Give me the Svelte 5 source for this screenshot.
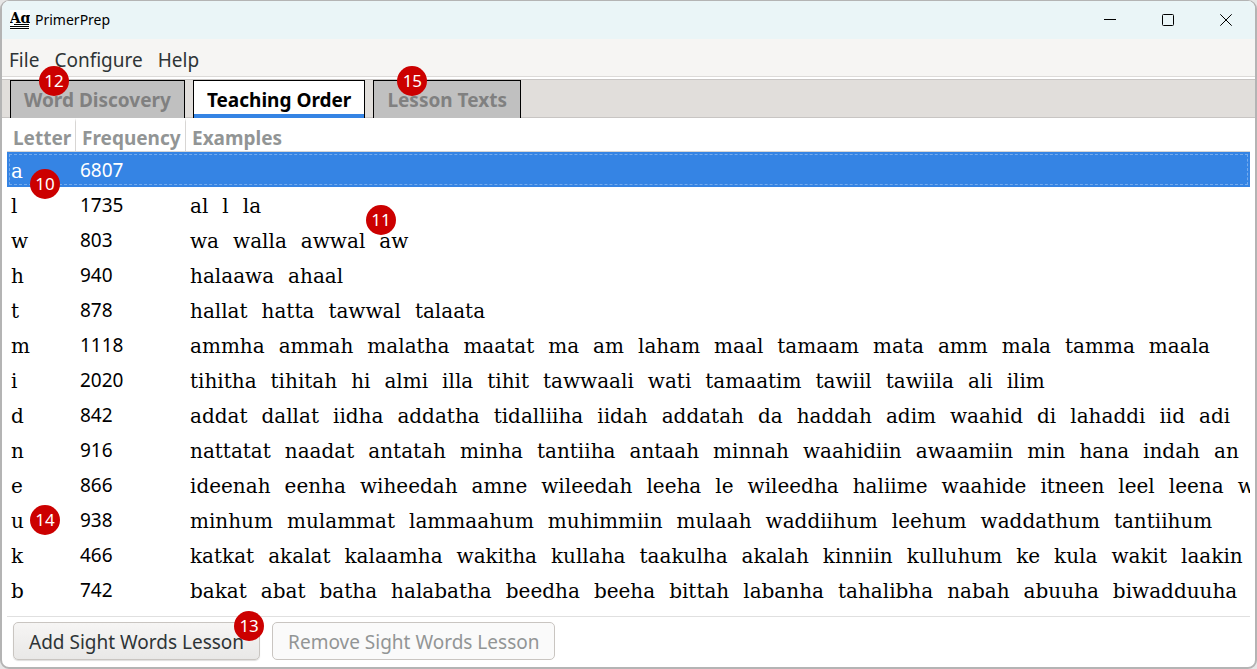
<script>
  const menus = ['File', 'Configure', 'Help'];
  let tabs = [
    { name: 'Word Discovery', note: 12 },
    { name: 'Teaching Order' },
    { name: 'Lesson Texts', note: 15 }
  ];
  let active = $state('Teaching Order');
  let selected = $state('a');

  const rows = [
    { letter: 'a', count: 6807, words: '', note: 10 },
    { letter: 'l', count: 1735, words: 'al l la' },
    { letter: 'w', count: 803, words: 'wa walla awwal aw', wordNote: 11 },
    { letter: 'h', count: 940, words: 'halaawa ahaal' },
    { letter: 't', count: 878, words: 'hallat hatta tawwal talaata' },
    { letter: 'm', count: 1118, words: 'ammha ammah malatha maatat ma am laham maal tamaam mata amm mala tamma maala' },
    { letter: 'i', count: 2020, words: 'tihitha tihitah hi almi illa tihit tawwaali wati tamaatim tawiil tawiila ali ilim' },
    { letter: 'd', count: 842, words: 'addat dallat iidha addatha tidalliiha iidah addatah da haddah adim waahid di lahaddi iid adi' },
    { letter: 'n', count: 916, words: 'nattatat naadat antatah minha tantiiha antaah minnah waahidiin awaamiin min hana indah an' },
    { letter: 'e', count: 866, words: 'ideenah eenha wiheedah amne wileedah leeha le wileedha haliime waahide itneen leel leena w' },
    { letter: 'u', count: 938, words: 'minhum mulammat lammaahum muhimmiin mulaah waddiihum leehum waddathum tantiihum', note: 14 },
    { letter: 'k', count: 466, words: 'katkat akalat kalaamha wakitha kullaha taakulha akalah kinniin kulluhum ke kula wakit laakin' },
    { letter: 'b', count: 742, words: 'bakat abat batha halabatha beedha beeha bittah labanha tahalibha nabah abuuha biwadduuha' }
  ];
</script>

<div class="window">
  <header class="titlebar">
    <svg class="logo" width="20" height="20" viewBox="0 0 20 20" aria-hidden="true">
      <rect width="20" height="20" fill="#fff" />
      <text x="10" y="13" text-anchor="middle" font-family="DejaVu Serif, serif" font-weight="bold" font-size="14">Aɑ</text>
      <path d="M4 14.5H19M0 16.5H19M0 18.5H19" stroke="#000" stroke-width="1" />
    </svg>
    <span class="title">PrimerPrep</span>
    <div class="controls">
      <button aria-label="Minimize"><svg width="12" height="12" viewBox="0 0 12 12"><path d="M0 5.5H12" /></svg></button>
      <button aria-label="Maximize"><svg width="12" height="12" viewBox="0 0 12 12"><rect x=".5" y=".5" width="11" height="11" rx="1" /></svg></button>
      <button aria-label="Close"><svg width="12" height="12" viewBox="0 0 12 12"><path d="M.3.3 11.7 11.7M11.7.3.3 11.7" /></svg></button>
    </div>
  </header>

  <nav class="menubar">
    {#each menus as menu}<button>{menu}</button>{/each}
  </nav>

  <div class="tabs" role="tablist">
    {#each tabs as tab}
      <button role="tab" aria-selected={active === tab.name} class:active={active === tab.name} onclick={() => (active = tab.name)}>
        {tab.name}
        {#if tab.note}<span class="badge" class:first={tab.note === 12} class:third={tab.note === 15}>{tab.note}</span>{/if}
      </button>
    {/each}
  </div>

  <main>
    <table>
      <thead>
        <tr><th class="c1">Letter</th><th class="c2">Frequency</th><th>Examples</th></tr>
      </thead>
      <tbody>
        {#each rows as row}
          <tr class:selected={selected === row.letter} onclick={() => (selected = row.letter)}>
            <td class="letter"><div>{row.letter}{#if row.note}<span class="badge at-letter" class:low={row.note === 10}>{row.note}</span>{/if}</div></td>
            <td class="count">{row.count}</td>
            <td class="examples">
              <div>
                {#each row.words.split(' ') as word}<span>{word}</span>{/each}
                {#if row.wordNote}<span class="badge at-word">{row.wordNote}</span>{/if}
              </div>
            </td>
          </tr>
        {/each}
      </tbody>
    </table>
  </main>

  <footer>
    <button>Add Sight Words Lesson<span class="badge at-button">13</span></button>
    <button disabled>Remove Sight Words Lesson</button>
  </footer>
</div>

<style>
  :global(body) {
    margin: 0;
    background: #e6e6e6;
  }
  .window {
    box-sizing: border-box;
    min-height: 100vh;
    display: flex;
    flex-direction: column;
    border: 1px solid #b4b4b4;
    border-width: 1px 2px 2px 2px;
    border-radius: 9px;
    background: #fff;
    font: 19px/24px 'Noto Sans', sans-serif;
    color: #000;
    overflow: hidden;
  }
  button {
    font: inherit;
    border: 0;
    padding: 0;
    background: none;
  }
  .titlebar {
    display: flex;
    align-items: center;
    height: 38px;
    padding-left: 8px;
    background: #eaf5f7;
  }
  .title {
    margin-left: 5px;
    font-size: 14px;
  }
  .controls {
    display: flex;
    margin-left: auto;
  }
  .controls button {
    display: grid;
    place-items: center;
    width: 58px;
    height: 38px;
  }
  .controls svg {
    fill: none;
    stroke: #000;
  }
  .menubar {
    display: flex;
    gap: 15px;
    height: 37px;
    padding: 0 7px;
    background: #f6f5f3;
    border-bottom: 1px solid #dcdad8;
  }
  .menubar button {
    padding-top: 5px;
    color: #2e3436;
  }
  .tabs {
    display: flex;
    gap: 8px;
    height: 38px;
    margin-top: 2px;
    padding: 0 8px;
    background: #e1dedb;
    border-top: 1px solid #c8c5c3;
    box-shadow: inset 0 -1px #c8c5c3;
  }
  .tabs button {
    position: relative;
    padding: 0 13px;
    border: 1px solid #000;
    border-bottom: 0;
    background: #c0c0c0;
    color: #808080;
    font-weight: bold;
  }
  .tabs .active {
    background: #fff;
    color: #000;
    box-shadow: inset 0 -4px #3584e4;
  }
  main {
    flex: 1;
    margin: 0 5px;
    border-bottom: 1px solid #e0e0e0;
    overflow: hidden;
  }
  table {
    width: 100%;
    table-layout: fixed;
    border-collapse: separate;
    border-spacing: 0;
  }
  th {
    height: 27px;
    padding: 2px 0 0 6px;
    border-bottom: 1px solid #d8d6d4;
    border-top: 4px solid #fff;
    text-align: left;
    font-weight: bold;
    color: #929595;
  }
  .c1 {
    width: 62px;
    border-right: 1px solid #d8d6d4;
  }
  .c2 {
    width: 103px;
    border-right: 1px solid #d8d6d4;
  }
  td {
    height: 35px;
    padding: 0 0 0 4px;
  }
  .letter div,
  .examples div {
    position: relative;
    padding-top: 2px;
    font-family: 'DejaVu Serif', serif;
    font-size: 20px;
  }
  .examples div {
    display: flex;
    gap: 14px;
    white-space: nowrap;
  }
  .selected {
    background: #3584e4;
    color: #fff;
    outline: 1px dashed #75abed;
    outline-offset: -3px;
  }
  footer {
    display: flex;
    gap: 12px;
    padding: 5px 11px 7px;
  }
  footer button {
    position: relative;
    height: 38px;
    padding: 1px 15px 0;
    border: 1px solid #c9c5c1;
    border-radius: 5px;
    background: linear-gradient(#f6f5f4, #e9e8e7);
    color: #2e3436;
    box-shadow: 0 1px 1px #0002;
  }
  footer button:disabled {
    background: #fafafa;
    color: #929595;
    box-shadow: none;
  }
  .badge {
    position: absolute;
    z-index: 1;
    width: 30px;
    height: 30px;
    border-radius: 50%;
    background: #c00;
    color: #fff;
    font: 17px/30px 'Noto Sans', sans-serif;
    text-align: center;
  }
  .first {
    left: 28px;
    top: -15px;
  }
  .third {
    left: 23px;
    top: -15px;
  }
  .letter .at-letter {
    left: 19px;
    top: -2px;
  }
  .letter .low {
    top: 12px;
  }
  .at-word {
    left: 176px;
    top: -22px;
  }
  .at-button {
    right: -5px;
    top: -12px;
  }
</style>
